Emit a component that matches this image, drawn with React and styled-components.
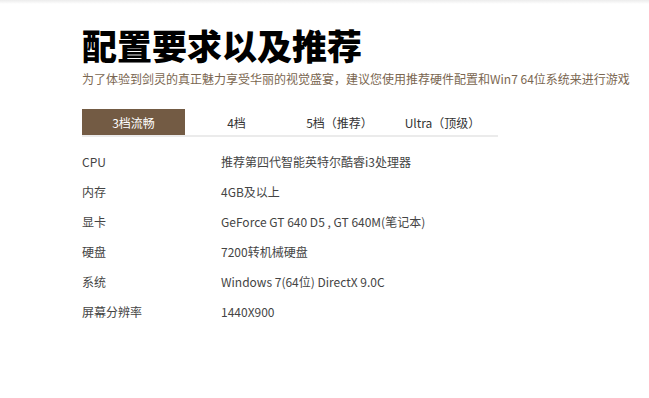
import React from "react";
import styled, { createGlobalStyle } from "styled-components";

const Global = createGlobalStyle`
  html, body { margin: 0; padding: 0; background: #fff; }
  body { font-family: "Noto Sans CJK SC", "Noto Sans", sans-serif; }
`;

const Page = styled.div`
  width: 649px;
  min-height: 398px;
  background: linear-gradient(#ececec, #fff 4px);
  box-sizing: border-box;
  padding: 22px 0 0 82px;
`;

const Title = styled.h1`
  margin: 0;
  font-size: 35px;
  line-height: 46px;
  font-weight: 900;
  color: #000;
  letter-spacing: 0;
`;

const Subtitle = styled.p`
  margin: 3px 0 0;
  font-size: 12px;
  line-height: 16px;
  color: #7a6650;
  white-space: nowrap;
`;

const Tabs = styled.div`
  display: flex;
  width: 416px;
  margin-top: 22px;
  border-bottom: 2px solid #ebebeb;
`;

const Tab = styled.div`
  width: 103px;
  height: 26px;
  display: flex;
  align-items: center;
  justify-content: center;
  font-size: 12px;
  color: ${(p) => (p.$active ? "#fff" : "#333")};
  background: ${(p) => (p.$active ? "#735b44" : "transparent")};
`;

const Specs = styled.div`
  display: grid;
  grid-template-columns: 139px auto;
  grid-auto-rows: 30px;
  margin-top: 9px;
  font-size: 12px;
  color: #444;
`;

const Cell = styled.div`
  display: flex;
  align-items: center;
`;

const rows = [
  ["CPU", "推荐第四代智能英特尔酷睿i3处理器"],
  ["内存", "4GB及以上"],
  ["显卡", "GeForce GT 640 D5 , GT 640M(笔记本)"],
  ["硬盘", "7200转机械硬盘"],
  ["系统", "Windows 7(64位) DirectX 9.0C"],
  ["屏幕分辨率", "1440X900"],
];

const tabs = ["3档流畅", "4档", "5档（推荐）", "Ultra（顶级）"];

export default function App() {
  return (
    <>
      <Global />
      <Page>
        <Title>配置要求以及推荐</Title>
        <Subtitle>
          为了体验到剑灵的真正魅力享受华丽的视觉盛宴，建议您使用推荐硬件配置和Win7 64位系统来进行游戏
        </Subtitle>
        <Tabs>
          {tabs.map((t, i) => (
            <Tab key={t} $active={i === 0}>
              {t}
            </Tab>
          ))}
        </Tabs>
        <Specs>
          {rows.map(([k, v]) => (
            <React.Fragment key={k}>
              <Cell>{k}</Cell>
              <Cell>{v}</Cell>
            </React.Fragment>
          ))}
        </Specs>
      </Page>
    </>
  );
}
